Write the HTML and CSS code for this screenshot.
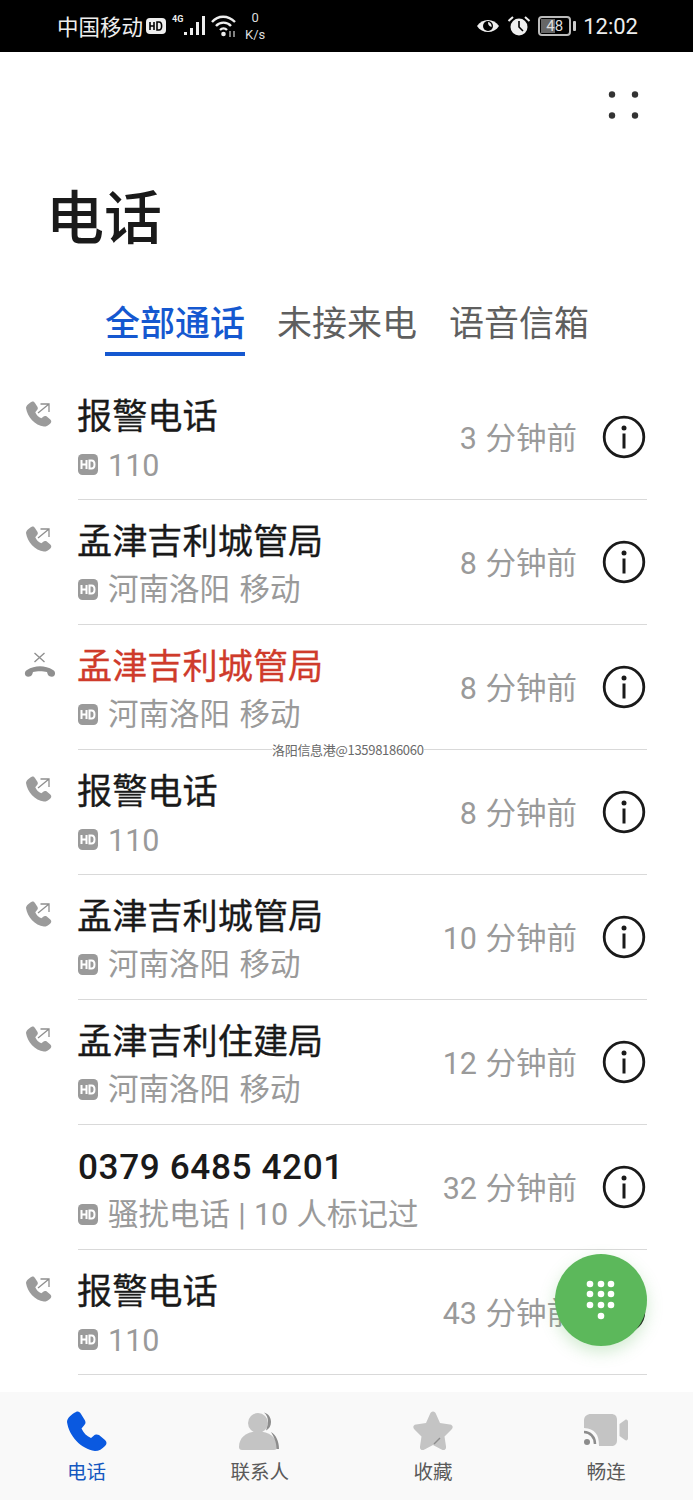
FILE: index.html
```html
<!DOCTYPE html>
<html lang="zh-CN">
<head>
<meta charset="utf-8">
<title>电话</title>
<link rel="stylesheet" href="styles.css">
</head>
<body>
<svg class="defs" width="0" height="0" aria-hidden="true">
  <defs>
    <path id="phone" d="M9 1C11 0 13 1 14 3L18 9.500C19 11.500 18.500 13 17 14.500L14.500 17.500C16.500 22 19.500 25 24 27L27 24.500C28 23.500 30 23 32 24L38 29C40 31 40 33 38 35C35 38 32 40 28 40C14 38 2 25 0 11C0 7 5 3 9 1Z"/>
    <g id="out">
      <use href="#phone" transform="translate(1 1) scale(.64)" fill="#9b9b9b"/>
      <path d="M13 13L24 4M15.500 4H24V12" fill="none" stroke="#8f8f8f" stroke-width="1.300"/>
    </g>
    <g id="info">
      <circle cx="22" cy="22" r="19.800" fill="none" stroke="#1a1a1a" stroke-width="2.800"/>
      <circle cx="22" cy="13" r="2.500" fill="#1a1a1a"/>
      <rect x="20.500" y="18.500" width="3" height="15" fill="#1a1a1a"/>
    </g>
    <g id="hd">
      <rect width="20" height="21" rx="4.500" fill="#9a9a9a"/>
      <path d="M3.500 6V15M3.500 10.500H8.500M8.500 6V15M11.500 6.500V14.500H13.500C17.500 14.500 17.500 6.500 13.500 6.500H11.500Z" fill="none" stroke="#fff" stroke-width="2"/>
    </g>
  </defs>
</svg>
<div class="screen">
  <header class="status">
    <div class="status-left">
      <span class="carrier">中国移动</span>
      <svg class="st-hd" width="20" height="18" viewBox="0 0 20 18"><rect y="1" width="20" height="16" rx="4" fill="#eee"/><path d="M4 5V13M4 9H8M8 5V13M11 5V13H13C16.500 13 16.500 5 13 5H11Z" fill="none" stroke="#000" stroke-width="1.600"/></svg>
      <span class="net">4G</span>
      <svg class="signal" width="22" height="22" viewBox="0 0 22 22"><rect x="0" y="17" width="3" height="3" fill="#eee"/><rect x="6" y="13" width="3" height="7" fill="#eee"/><rect x="12" y="7" width="3" height="13" fill="#eee"/><rect x="18" y="1" width="3" height="19" fill="#eee"/></svg>
      <svg class="wifi" width="26" height="24" viewBox="0 0 26 24"><path d="M1 8C7 1 17 1 24 8M5 12C9 7.500 16 7.500 20 12M9 16C11 14 14 14 16 16" fill="none" stroke="#eee" stroke-width="2.400"/><circle cx="12.500" cy="20" r="2.300" fill="#eee"/><path d="M19 17V23M23 23V17" stroke="#aaa" stroke-width="1.500"/></svg>
      <span class="speed"><span>0</span><span>K/s</span></span>
    </div>
    <div class="status-right">
      <svg width="24" height="18" viewBox="0 0 24 18"><path d="M1 9C6 1 18 1 23 9C18 17 6 17 1 9Z" fill="#eee"/><circle cx="12" cy="9" r="5" fill="#000"/><path d="M12 5A4 4 0 0 1 15.500 10C13 9 12 8 12 5Z" fill="#eee"/></svg>
      <svg width="24" height="22" viewBox="0 0 24 22"><circle cx="12" cy="12" r="8.500" fill="#eee"/><path d="M12 6V12L16 16" fill="none" stroke="#000" stroke-width="1.600"/><path d="M1.500 6L6 2M22.500 6L18 2" stroke="#eee" stroke-width="2"/></svg>
      <span class="battery"><span class="battery-box"><span class="battery-fill"></span><span class="battery-num">48</span></span><span class="battery-cap"></span></span>
      <span class="clock">12:02</span>
    </div>
  </header>

  <div class="toolbar">
    <svg width="34" height="30" viewBox="0 0 34 30"><circle cx="6" cy="4.500" r="3.200" fill="#333"/><circle cx="29" cy="4.500" r="3.200" fill="#333"/><circle cx="6" cy="25.500" r="3.200" fill="#333"/><circle cx="29" cy="25.500" r="3.200" fill="#333"/></svg>
  </div>
  <h1 class="title">电话</h1>
  <nav class="tabs">
    <span class="tab active">全部通话</span>
    <span class="tab">未接来电</span>
    <span class="tab">语音信箱</span>
  </nav>

  <ul class="calls">
    <li class="call">
      <div class="call-icon"><svg width="28" height="28" viewBox="0 0 28 28"><use href="#out"/></svg></div>
      <div class="call-main">
        <div class="call-text"><div class="name">报警电话</div><div class="sub"><svg width="20" height="21"><use href="#hd"/></svg><span class="num">110</span></div></div>
        <span class="time">3 分钟前</span>
        <svg class="info" width="44" height="44"><use href="#info"/></svg>
      </div>
    </li>
    <li class="call">
      <div class="call-icon"><svg width="28" height="28" viewBox="0 0 28 28"><use href="#out"/></svg></div>
      <div class="call-main">
        <div class="call-text"><div class="name">孟津吉利城管局</div><div class="sub"><svg width="20" height="21"><use href="#hd"/></svg><span>河南洛阳 移动</span></div></div>
        <span class="time">8 分钟前</span>
        <svg class="info" width="44" height="44"><use href="#info"/></svg>
      </div>
    </li>
    <li class="call">
      <div class="call-icon"><svg class="missed" width="32" height="28" viewBox="0 0 32 28"><path d="M10.500 3L20.500 12M20.500 3L10.500 12" stroke="#8f8f8f" stroke-width="1.400" fill="none"/><path d="M2 26C0 24 1 21 3 20C11 15 21 15 29 20C31 21 32 24 30 26C29 27 27 27 25 26C24 25 23.500 24 23 22C19 21 13 21 9 22C8.500 24 8 25 7 26C5 27 3 27 2 26Z" fill="#8f8f8f"/></svg></div>
      <div class="call-main">
        <div class="call-text"><div class="name missed-name">孟津吉利城管局</div><div class="sub"><svg width="20" height="21"><use href="#hd"/></svg><span>河南洛阳 移动</span></div></div>
        <span class="time">8 分钟前</span>
        <svg class="info" width="44" height="44"><use href="#info"/></svg>
      </div>
    </li>
    <li class="call">
      <div class="call-icon"><svg width="28" height="28" viewBox="0 0 28 28"><use href="#out"/></svg></div>
      <div class="call-main">
        <div class="call-text"><div class="name">报警电话</div><div class="sub"><svg width="20" height="21"><use href="#hd"/></svg><span class="num">110</span></div></div>
        <span class="time">8 分钟前</span>
        <svg class="info" width="44" height="44"><use href="#info"/></svg>
      </div>
    </li>
    <li class="call">
      <div class="call-icon"><svg width="28" height="28" viewBox="0 0 28 28"><use href="#out"/></svg></div>
      <div class="call-main">
        <div class="call-text"><div class="name">孟津吉利城管局</div><div class="sub"><svg width="20" height="21"><use href="#hd"/></svg><span>河南洛阳 移动</span></div></div>
        <span class="time">10 分钟前</span>
        <svg class="info" width="44" height="44"><use href="#info"/></svg>
      </div>
    </li>
    <li class="call">
      <div class="call-icon"><svg width="28" height="28" viewBox="0 0 28 28"><use href="#out"/></svg></div>
      <div class="call-main">
        <div class="call-text"><div class="name">孟津吉利住建局</div><div class="sub"><svg width="20" height="21"><use href="#hd"/></svg><span>河南洛阳 移动</span></div></div>
        <span class="time">12 分钟前</span>
        <svg class="info" width="44" height="44"><use href="#info"/></svg>
      </div>
    </li>
    <li class="call">
      <div class="call-icon"></div>
      <div class="call-main">
        <div class="call-text"><div class="name number">0379 6485 4201</div><div class="sub"><svg width="20" height="21"><use href="#hd"/></svg><span class="tag">骚扰电话 | 10 人标记过</span></div></div>
        <span class="time">32 分钟前</span>
        <svg class="info" width="44" height="44"><use href="#info"/></svg>
      </div>
    </li>
    <li class="call">
      <div class="call-icon"><svg width="28" height="28" viewBox="0 0 28 28"><use href="#out"/></svg></div>
      <div class="call-main">
        <div class="call-text"><div class="name">报警电话</div><div class="sub"><svg width="20" height="21"><use href="#hd"/></svg><span class="num">110</span></div></div>
        <span class="time">43 分钟前</span>
        <svg class="info" width="44" height="44"><use href="#info"/></svg>
      </div>
    </li>
  </ul>

  <footer class="bottom">
    <div class="item active">
      <svg width="40" height="40" viewBox="0 0 40 40"><use href="#phone" fill="#0a59e0"/></svg>
      <span>电话</span>
    </div>
    <div class="item">
      <svg width="42" height="40" viewBox="0 0 42 40"><circle cx="19" cy="12" r="10" fill="#c4c4c4"/><path d="M0 36C0 26 8 20.500 19 20.500C30 20.500 38 26 38 36C38 38 37 39 35 39H3C1 39 0 38 0 36Z" fill="#c4c4c4"/><path d="M25 1.500C30 3 32 7 32 11C32 15 30 18 27 19.500C28 16 29 14 29 11C29 7 28 4 25 1.500ZM32 21C37 24 40 30 40 38H37.500C37.500 31 35 26 32 21Z" fill="#8c8c8c"/></svg>
      <span>联系人</span>
    </div>
    <div class="item">
      <svg width="40" height="40" viewBox="0 0 40 40"><path d="M20 .5C21.500 .5 22.500 1.500 23 3L27 12L37 13.500C40 14 40.500 16.500 38.500 18.500L31.500 25.500L33 35.500C33.500 38.500 31 40 28.500 38.500L20 34L11.500 38.500C9 40 6.500 38.500 7 35.500L8.500 25.500L1.500 18.500C-.5 16.500 0 14 3 13.500L13 12L17 3C17.500 1.500 18.500 .5 20 .5Z" fill="#c4c4c4"/><path d="M21 33L27 27" stroke="#8c8c8c" stroke-width="1.500"/></svg>
      <span>收藏</span>
    </div>
    <div class="item">
      <svg width="44" height="40" viewBox="0 0 44 40"><path d="M7 3H27C31 3 33 5 33 9V29C33 33 31 35 27 35H15C15 23 11 18 0 17V10C0 5 3 3 7 3Z" fill="#c4c4c4"/><path d="M35.500 13L41 9C42.500 8 44 9 44 11V27C44 29 42.500 30 41 29L35.500 25Z" fill="#c4c4c4"/><path d="M0 21C6 21 11 26 11 33" fill="none" stroke="#8c8c8c" stroke-width="2.500"/><circle cx="3" cy="31" r="3" fill="#8c8c8c"/></svg>
      <span>畅连</span>
    </div>
  </footer>

  <div class="watermark">洛阳信息港@13598186060</div>
  <button class="fab" aria-label="拨号盘">
    <svg width="32" height="42" viewBox="0 0 32 42"><g fill="#fff"><circle cx="5" cy="5" r="3.300"/><circle cx="16" cy="5" r="3.300"/><circle cx="26" cy="5" r="3.300"/><circle cx="5" cy="15" r="3.300"/><circle cx="16" cy="15" r="3.300"/><circle cx="26" cy="15" r="3.300"/><circle cx="5" cy="26" r="3.300"/><circle cx="16" cy="26" r="3.300"/><circle cx="26" cy="26" r="3.300"/><circle cx="16" cy="37" r="3.300"/></g></svg>
  </button>
</div>
</body>
</html>
```
FILE: styles.css
```css
* { box-sizing: border-box; }
html, body { margin: 0; padding: 0; }
body {
  width: 693px;
  height: 1500px;
  overflow: hidden;
  background: #fff;
  font-family: Roboto, "Noto Sans CJK SC", sans-serif;
}
.defs { position: absolute; }
.screen {
  position: relative;
  width: 693px;
  height: 1500px;
  display: flex;
  flex-direction: column;
  overflow: hidden;
}

/* status bar */
.status {
  flex: none;
  height: 52px;
  background: #000;
  color: #eee;
  display: flex;
  justify-content: space-between;
  align-items: center;
  padding: 0 55px 0 57px;
}
.status-left, .status-right { display: flex; align-items: center; }
.carrier { font-size: 21.500px; line-height: 52px; width: 87px; font-family: "Noto Sans CJK SC", sans-serif; }
.st-hd { margin-left: 2px; }
.net { font-size: 9px; font-weight: 700; margin: -14px 0 0 6px; width: 12px; }
.wifi { margin-left: 5px; }
.speed {
  display: flex;
  flex-direction: column;
  align-items: center;
  font-size: 13px;
  line-height: 17px;
  margin-left: 8px;
  color: #ddd;
}
.status-right { gap: 7px; }
.battery { display: flex; align-items: center; gap: 2px; }
.battery-box {
  position: relative;
  width: 33px;
  height: 20px;
  border: 2px solid #bbb;
  border-radius: 4px;
  display: flex;
  align-items: center;
  justify-content: center;
}
.battery-fill { position: absolute; left: 1px; top: 1px; bottom: 1px; width: 14px; background: #666; }
.battery-num { position: relative; font-size: 15px; line-height: 16px; color: #ddd; }
.battery-cap { width: 3px; height: 10px; background: #ccc; border-radius: 1px; }
.clock { font-size: 22px; color: #eee; }

/* header */
.toolbar {
  flex: none;
  height: 117px;
  padding: 38px 53px 0 0;
  display: flex;
  justify-content: flex-end;
  align-items: flex-start;
}
.title {
  flex: none;
  margin: 0;
  padding-left: 46px;
  height: 90px;
  line-height: 90px;
  font-size: 58px;
  font-weight: 500;
  color: #1a1a1a;
  font-family: "Noto Sans CJK SC", sans-serif;
}
.tabs {
  flex: none;
  display: flex;
  gap: 32px;
  padding-left: 105px;
  margin-top: 39px;
  margin-bottom: 19px;
}
.tab {
  width: 140px;
  font-size: 35px;
  line-height: 46px;
  height: 58px;
  padding-bottom: 8px;
  color: #5f5f5f;
  font-family: "Noto Sans CJK SC", sans-serif;
  border-bottom: 4px solid transparent;
  white-space: nowrap;
}
.tab.active { color: #1558d0; border-bottom-color: #1558d0; font-weight: 500; }

/* list */
.calls {
  flex: 1;
  min-height: 0;
  list-style: none;
  margin: 0;
  padding: 0;
  overflow: hidden;
}
.call { display: flex; height: 125px; }
.call-icon { width: 78px; flex: none; padding: 25px 0 0 25px; }
.missed { margin: 0 0 0 -1px; display: block; }
.call-main {
  flex: none;
  width: 569px;
  display: flex;
  align-items: center;
  border-bottom: 1px solid #d9d9d9;
}
.call-text { flex: 1; min-width: 0; padding-top: 5px; }
.name {
  font-size: 35.200px;
  line-height: 46px;
  height: 50px;
  margin-left: -1px;
  color: #1a1a1a;
  font-family: "Noto Sans CJK SC", sans-serif;
  white-space: nowrap;
  -webkit-text-stroke: .3px currentColor;
}
.number {
  font-weight: 500;
  font-family: Roboto, sans-serif;
  letter-spacing: .6px;
  line-height: 52px;
  margin-left: 0;
  -webkit-text-stroke: 0;
}
.missed-name { color: #cf3b2b; }
.sub {
  display: flex;
  align-items: center;
  gap: 10px;
  height: 48px;
  font-size: 30.500px;
  color: #9a9a9a;
  white-space: nowrap;
  word-spacing: 2px;
}
.sub span { margin-top: -6px; }
.sub .num { margin-top: 2px; }
.sub .tag { word-spacing: .7px; }
.sub svg { flex: none; margin-top: -1px; }
.time {
  font-size: 30.500px;
  line-height: 48px;
  height: 44px;
  word-spacing: 1px;
  color: #9a9a9a;
  margin-right: 25px;
  white-space: nowrap;
}
.info { flex: none; margin-right: 1px; }

/* bottom navigation */
.bottom {
  flex: none;
  height: 108px;
  background: #f9f9f9;
  display: grid;
  grid-template-columns: repeat(4, 1fr);
}
.item {
  display: flex;
  flex-direction: column;
  align-items: center;
  padding-top: 19px;
  color: #5a5a5a;
  font-size: 19.500px;
  font-family: "Noto Sans CJK SC", sans-serif;
}
.item span { line-height: 28px; margin-top: 6px; }
.item svg { display: block; }
.item.active { color: #1558c0; }

/* overlays */
.watermark {
  position: absolute;
  left: 272px;
  top: 741px;
  font-size: 13px;
  line-height: 18px;
  color: #6a6a6a;
  font-family: "Noto Sans CJK SC", sans-serif;
  background: #fff;
  letter-spacing: -.3px;
}
.fab {
  position: absolute;
  left: 555px;
  top: 1254px;
  width: 92px;
  height: 92px;
  border: 0;
  padding: 0;
  border-radius: 50%;
  background: #5cb85b;
  box-shadow: 0 6px 16px rgba(92, 184, 91, .28);
  display: flex;
  align-items: center;
  justify-content: center;
}
```
